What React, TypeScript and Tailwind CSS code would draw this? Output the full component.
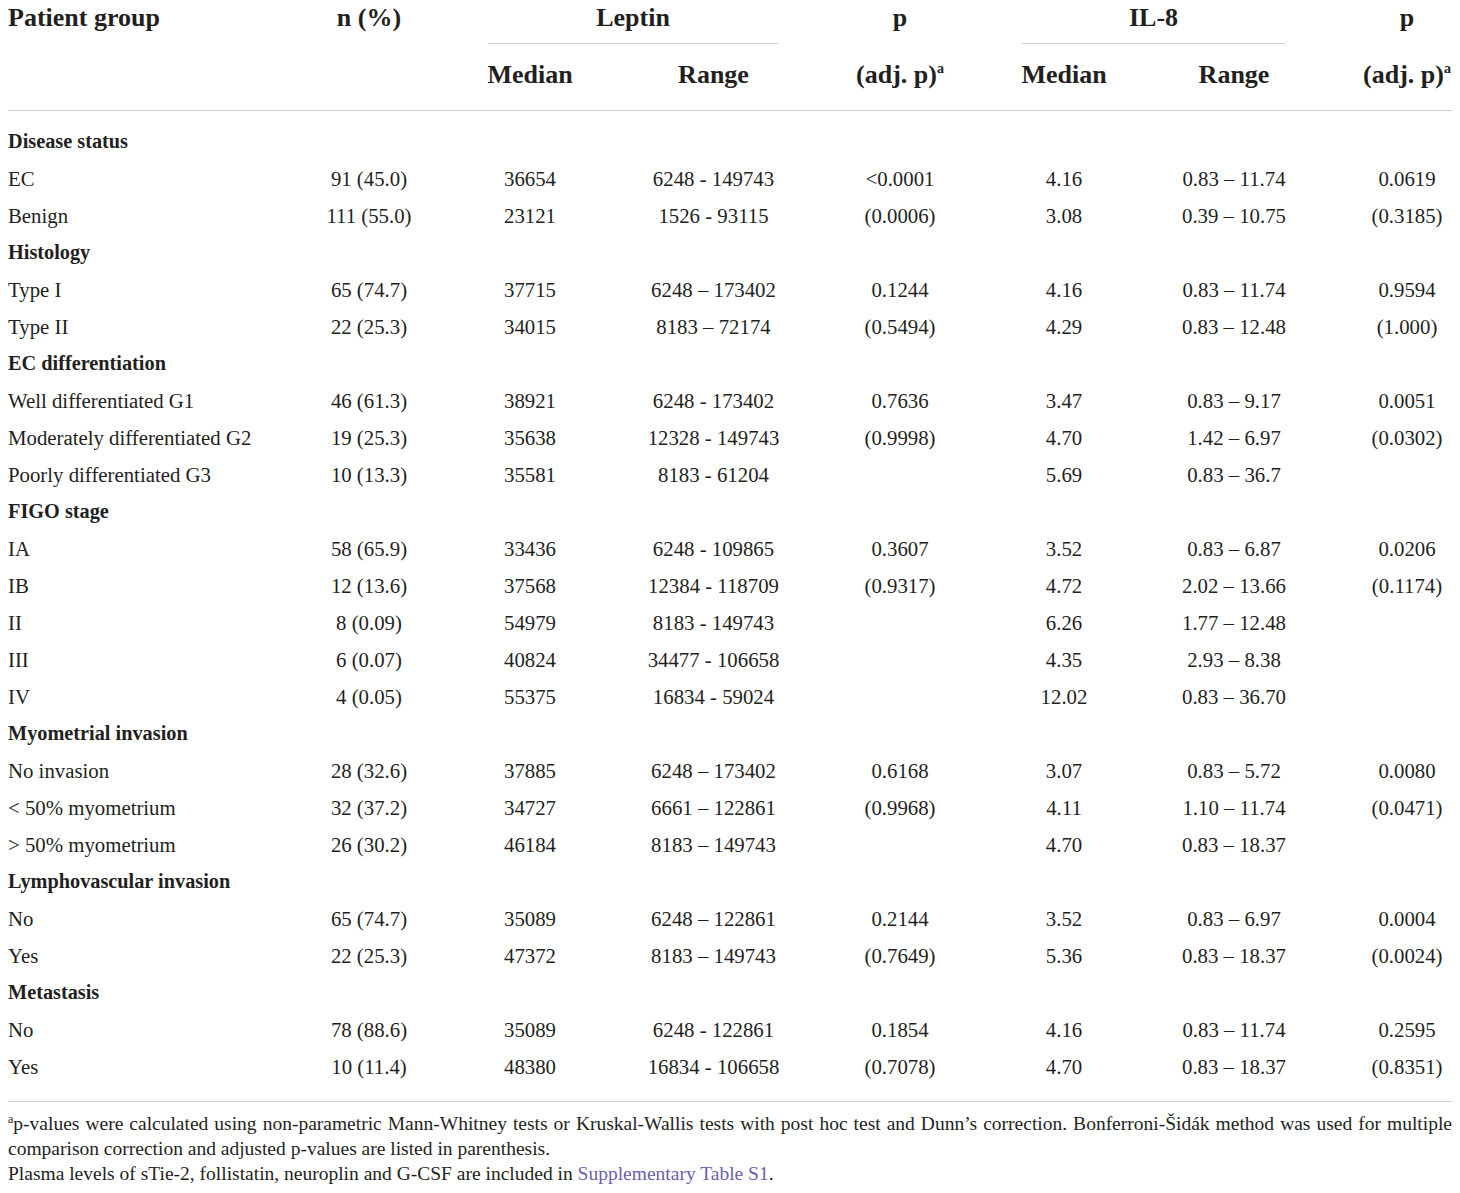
import React from "react";

type Row =
  | { section: string }
  | { label: string; n: string; lm: string; lr: string; lp: string; im: string; ir: string; ip: string };

const rows: Row[] = [
  { section: "Disease status" },
  { label: "EC", n: "91 (45.0)", lm: "36654", lr: "6248 - 149743", lp: "<0.0001", im: "4.16", ir: "0.83 – 11.74", ip: "0.0619" },
  { label: "Benign", n: "111 (55.0)", lm: "23121", lr: "1526 - 93115", lp: "(0.0006)", im: "3.08", ir: "0.39 – 10.75", ip: "(0.3185)" },
  { section: "Histology" },
  { label: "Type I", n: "65 (74.7)", lm: "37715", lr: "6248 – 173402", lp: "0.1244", im: "4.16", ir: "0.83 – 11.74", ip: "0.9594" },
  { label: "Type II", n: "22 (25.3)", lm: "34015", lr: "8183 – 72174", lp: "(0.5494)", im: "4.29", ir: "0.83 – 12.48", ip: "(1.000)" },
  { section: "EC differentiation" },
  { label: "Well differentiated G1", n: "46 (61.3)", lm: "38921", lr: "6248 - 173402", lp: "0.7636", im: "3.47", ir: "0.83 – 9.17", ip: "0.0051" },
  { label: "Moderately differentiated G2", n: "19 (25.3)", lm: "35638", lr: "12328 - 149743", lp: "(0.9998)", im: "4.70", ir: "1.42 – 6.97", ip: "(0.0302)" },
  { label: "Poorly differentiated G3", n: "10 (13.3)", lm: "35581", lr: "8183 - 61204", lp: "", im: "5.69", ir: "0.83 – 36.7", ip: "" },
  { section: "FIGO stage" },
  { label: "IA", n: "58 (65.9)", lm: "33436", lr: "6248 - 109865", lp: "0.3607", im: "3.52", ir: "0.83 – 6.87", ip: "0.0206" },
  { label: "IB", n: "12 (13.6)", lm: "37568", lr: "12384 - 118709", lp: "(0.9317)", im: "4.72", ir: "2.02 – 13.66", ip: "(0.1174)" },
  { label: "II", n: "8 (0.09)", lm: "54979", lr: "8183 - 149743", lp: "", im: "6.26", ir: "1.77 – 12.48", ip: "" },
  { label: "III", n: "6 (0.07)", lm: "40824", lr: "34477 - 106658", lp: "", im: "4.35", ir: "2.93 – 8.38", ip: "" },
  { label: "IV", n: "4 (0.05)", lm: "55375", lr: "16834 - 59024", lp: "", im: "12.02", ir: "0.83 – 36.70", ip: "" },
  { section: "Myometrial invasion" },
  { label: "No invasion", n: "28 (32.6)", lm: "37885", lr: "6248 – 173402", lp: "0.6168", im: "3.07", ir: "0.83 – 5.72", ip: "0.0080" },
  { label: "< 50% myometrium", n: "32 (37.2)", lm: "34727", lr: "6661 – 122861", lp: "(0.9968)", im: "4.11", ir: "1.10 – 11.74", ip: "(0.0471)" },
  { label: "> 50% myometrium", n: "26 (30.2)", lm: "46184", lr: "8183 – 149743", lp: "", im: "4.70", ir: "0.83 – 18.37", ip: "" },
  { section: "Lymphovascular invasion" },
  { label: "No", n: "65 (74.7)", lm: "35089", lr: "6248 – 122861", lp: "0.2144", im: "3.52", ir: "0.83 – 6.97", ip: "0.0004" },
  { label: "Yes", n: "22 (25.3)", lm: "47372", lr: "8183 – 149743", lp: "(0.7649)", im: "5.36", ir: "0.83 – 18.37", ip: "(0.0024)" },
  { section: "Metastasis" },
  { label: "No", n: "78 (88.6)", lm: "35089", lr: "6248 - 122861", lp: "0.1854", im: "4.16", ir: "0.83 – 11.74", ip: "0.2595" },
  { label: "Yes", n: "10 (11.4)", lm: "48380", lr: "16834 - 106658", lp: "(0.7078)", im: "4.70", ir: "0.83 – 18.37", ip: "(0.8351)" },
];

const cols = "grid grid-cols-[292px_138px_184px_183px_190px_138px_202px_117px]";

const App: React.FC = () => {
  return (
    <div
      className="w-[1460px] bg-white px-[8px] text-[#231f20]"
      style={{ fontFamily: '"Liberation Serif", "DejaVu Serif", serif' }}
    >
      {/* header */}
      <div className="border-b border-[#cfcfcf] text-[26px] font-bold">
        <div className={`${cols} h-[44px]`}>
          <div className="leading-[36px]">Patient group</div>
          <div className="text-center leading-[36px]">n (%)</div>
          <div className="col-span-2">
            <div className="ml-[50px] w-[290px] border-b border-[#cfcfcf] pb-[7px] text-center leading-[36px]">
              Leptin
            </div>
          </div>
          <div className="text-center leading-[36px]">p</div>
          <div className="col-span-2">
            <div className="ml-[27px] w-[263px] border-b border-[#cfcfcf] pb-[7px] text-center leading-[36px]">
              IL-8
            </div>
          </div>
          <div className="pl-[27px] text-center leading-[36px]">p</div>
        </div>
        <div className={`${cols} h-[66px] pt-[13px] leading-[36px]`}>
          <div />
          <div />
          <div className="text-center">Median</div>
          <div className="text-center">Range</div>
          <div className="text-center">
            (adj. p)<span className="relative -top-[10px] text-[14px]">a</span>
          </div>
          <div className="text-center">Median</div>
          <div className="text-center">Range</div>
          <div className="pl-[27px] text-center">
            (adj. p)<span className="relative -top-[10px] text-[14px]">a</span>
          </div>
        </div>
      </div>

      {/* body */}
      <div className="border-b border-[#cfcfcf] pt-[12px] pb-[16px] text-[20.8px]">
        {rows.map((r, i) =>
          "section" in r ? (
            <div key={i} className="flex h-[37px] items-center text-[20.3px] font-bold">
              {r.section}
            </div>
          ) : (
            <div key={i} className={`${cols} h-[37px] items-center`}>
              <div>{r.label}</div>
              <div className="text-center">{r.n}</div>
              <div className="text-center">{r.lm}</div>
              <div className="text-center">{r.lr}</div>
              <div className="text-center">{r.lp}</div>
              <div className="text-center">{r.im}</div>
              <div className="text-center">{r.ir}</div>
              <div className="pl-[27px] text-center">{r.ip}</div>
            </div>
          )
        )}
      </div>

      {/* footnote */}
      <div className="pt-[9px] pb-[8px] text-[19.5px] leading-[25px]">
        <p className="text-justify [text-align-last:justify]">
          <span className="relative -top-[7px] text-[12px] leading-none">a</span>p-values were calculated using
          non-parametric Mann-Whitney tests or Kruskal-Wallis tests with post hoc test and Dunn’s correction.
          Bonferroni-Šidák method was used for multiple
        </p>
        <p>comparison correction and adjusted p-values are listed in parenthesis.</p>
        <p>
          Plasma levels of sTie-2, follistatin, neuroplin and G-CSF are included in{" "}
          <span className="text-[#6a5fb0]">Supplementary Table S1</span>.
        </p>
      </div>
    </div>
  );
};

export default App;
